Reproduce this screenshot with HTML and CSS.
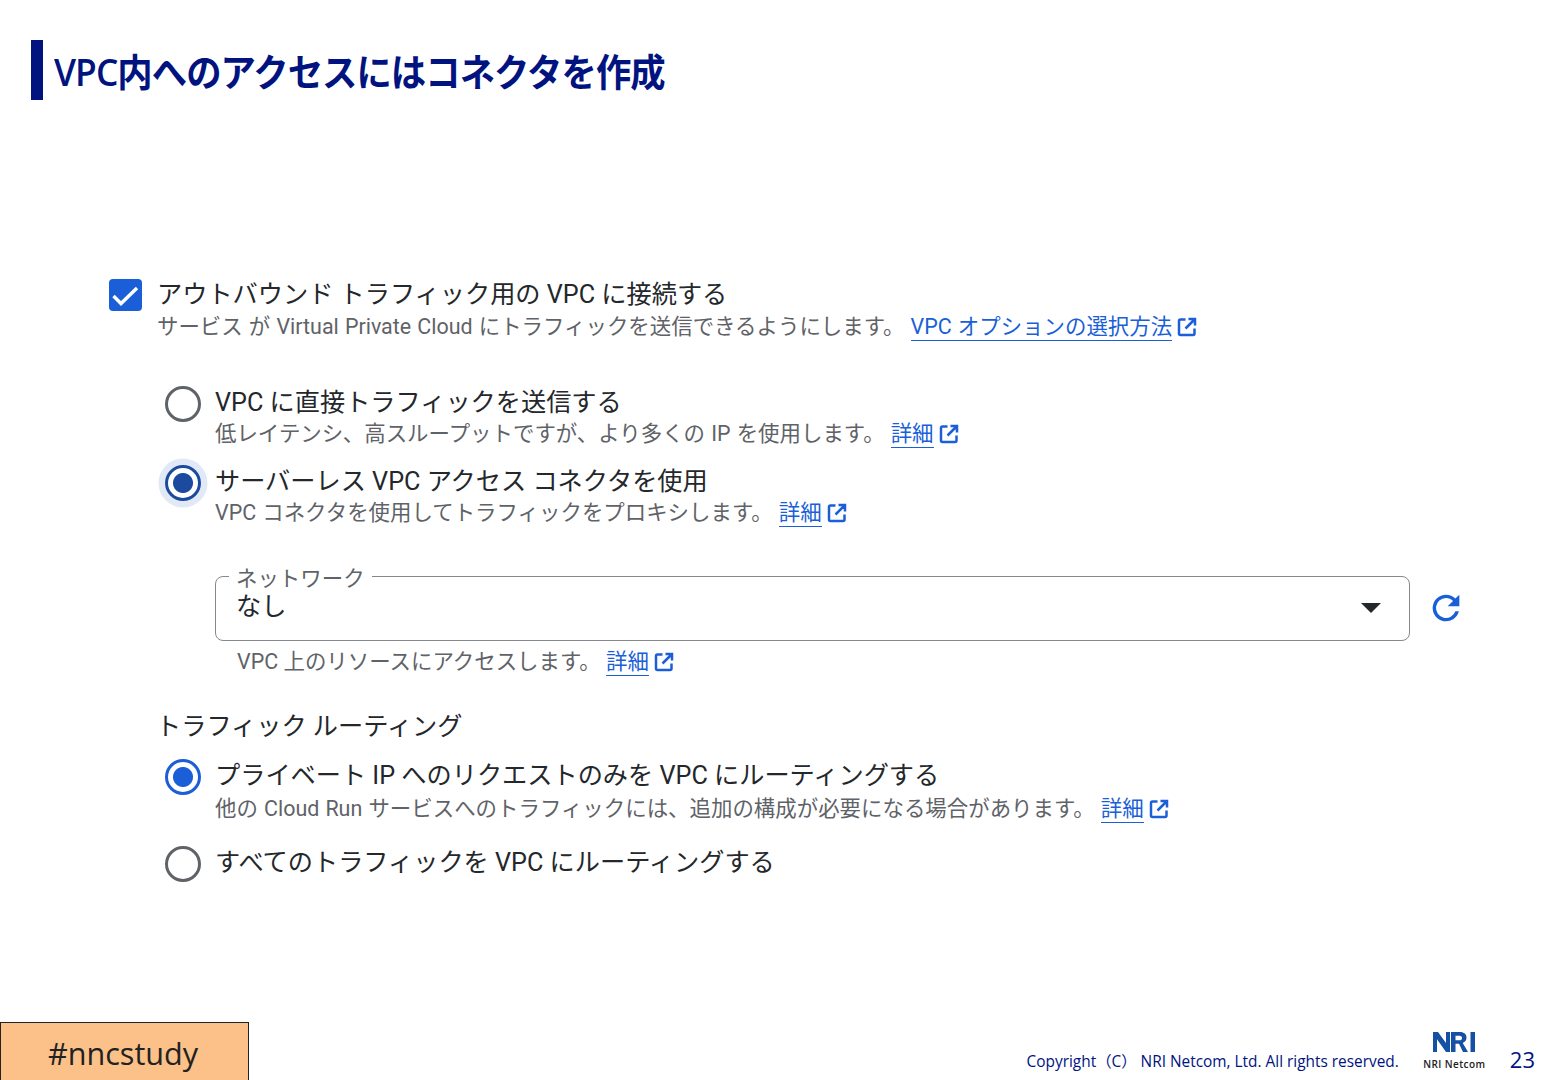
FILE: index.html
```html
<!DOCTYPE html>
<html lang="ja">
<head>
    <meta charset="UTF-8">
    <title>VPC内へのアクセスにはコネクタを作成</title>
    <link rel="stylesheet" href="styles.css">
</head>
<body>
<svg class="defs" width="0" height="0">
    <symbol id="ext" viewBox="0 0 20 20">
        <path d="M8.500 2.500H3.500A1.500 1.500 0 0 0 2 4V16.500A1.500 1.500 0 0 0 3.500 18H16A1.500 1.500 0 0 0 17.500 16.500V11.500M11.500 2H18V8.500M17.500 2.500L8.500 11.500" fill="none" stroke="currentColor" stroke-width="2.500"/>
    </symbol>
</svg>
<div class="slide">
    <div class="title"><h1>VPC内へのアクセスにはコネクタを作成</h1></div>

    <div class="content">
        <div class="check-row">
            <span class="checkbox">
                <svg width="33" height="32" viewBox="0 0 33 32"><path d="M4.500 17L12 24.500L28 9" fill="none" stroke="#fff" stroke-width="3.400"/></svg>
            </span>
            <div>
                <div class="label">アウトバウンド トラフィック用の VPC に接続する</div>
                <div class="sub">サービス が Virtual Private Cloud にトラフィックを送信できるようにします。 <a>VPC オプションの選択方法</a><svg class="ext"><use href="#ext"/></svg></div>
            </div>
        </div>

        <div class="radio-group first">
            <div class="radio-row">
                <span class="radio"></span>
                <div>
                    <div class="label">VPC に直接トラフィックを送信する</div>
                    <div class="sub">低レイテンシ、高スループットですが、より多くの IP を使用します。 <a>詳細</a><svg class="ext"><use href="#ext"/></svg></div>
                </div>
            </div>
            <div class="radio-row">
                <span class="radio on focus"></span>
                <div>
                    <div class="label">サーバーレス VPC アクセス コネクタを使用</div>
                    <div class="sub">VPC コネクタを使用してトラフィックをプロキシします。 <a>詳細</a><svg class="ext"><use href="#ext"/></svg></div>
                </div>
            </div>
        </div>

        <div class="field-row">
            <div class="select">
                <span class="select-label">ネットワーク</span>
                <span class="select-value">なし</span>
                <span class="caret"></span>
            </div>
            <svg class="refresh" width="40" height="40" viewBox="0 0 24 24"><path fill="#1a5fd8" d="M17.650 6.350A7.960 7.960 0 0 0 12 4a8 8 0 1 0 7.730 10h-2.080A6 6 0 1 1 12 6c1.660 0 3.140.69 4.220 1.780L13 11h7V4z"/></svg>
        </div>
        <div class="hint">VPC 上のリソースにアクセスします。 <a>詳細</a><svg class="ext"><use href="#ext"/></svg></div>

        <div class="section">トラフィック ルーティング</div>

        <div class="radio-group routing">
            <div class="radio-row">
                <span class="radio on bright"></span>
                <div>
                    <div class="label">プライベート IP へのリクエストのみを VPC にルーティングする</div>
                    <div class="sub">他の Cloud Run サービスへのトラフィックには、追加の構成が必要になる場合があります。 <a>詳細</a><svg class="ext"><use href="#ext"/></svg></div>
                </div>
            </div>
            <div class="radio-row last">
                <span class="radio"></span>
                <div class="label">すべてのトラフィックを VPC にルーティングする</div>
            </div>
        </div>
    </div>

    <div class="footer">
        <div class="tag">#nncstudy</div>
        <div class="footer-right">
            <span class="copyright">Copyright（C） NRI Netcom, Ltd. All rights reserved.</span>
            <div class="logo">
                <svg width="42" height="20" viewBox="0 0 42 18" preserveAspectRatio="none"><path fill="#1450a3" fill-rule="evenodd" d="M0 18V0h5l8 10V0h4v18h-4L4 6.500V18zM18 0h9c4 0 6.500 2 6.500 5 0 2.500-1.500 4.200-3.800 4.800L35 18h-5l-4-7.500h-3.500V18H18zM22.500 3.300V7.500h4c1.600 0 2.500-.8 2.500-2.100s-.9-2.100-2.500-2.100zM37.500 0H42v18h-4.500z"/></svg>
                <span>NRI Netcom</span>
            </div>
            <span class="page-no">23</span>
        </div>
    </div>
</div>
</body>
</html>
```
FILE: styles.css
```css
:root {
    --navy: #00137f;
    --blue: #1a5fd8;
    --text: #24272b;
    --muted: #5f6368;
}
html, body {
    margin: 0;
    padding: 0;
    background: #fff;
}
.defs { position: absolute; }
.slide {
    width: 1560px;
    height: 1080px;
    display: flex;
    flex-direction: column;
    overflow: hidden;
    font-family: Roboto, "Noto Sans CJK JP", sans-serif;
    color: var(--text);
}
.title {
    margin: 40px 0 0 31px;
    height: 60px;
    border-left: 12px solid var(--navy);
    padding-left: 11px;
    display: flex;
    align-items: center;
}
h1 {
    margin: 2px 0 0;
    color: var(--navy);
    font-family: "Open Sans", "Noto Sans CJK JP", sans-serif;
    font-size: 38px;
    font-weight: 600;
    letter-spacing: -1px;
    line-height: 60px;
    white-space: nowrap;
    transform: scaleX(0.93);
    transform-origin: left center;
}
.content {
    flex: 1;
    padding: 179px 0 0 109px;
}
.check-row {
    display: flex;
    gap: 15px;
}
.checkbox {
    width: 33px;
    height: 32px;
    background: var(--blue);
    border-radius: 4px;
    flex: none;
}
.checkbox svg { display: block; }
.label {
    font-size: 25.200px;
    line-height: 32px;
}
.sub, .hint {
    font-size: 21.450px;
    word-spacing: .8px;
    line-height: 32px;
    color: var(--muted);
}
a {
    color: var(--blue);
    border-bottom: 1px solid var(--blue);
    padding-bottom: 1px;
}
.ext {
    width: 20px;
    height: 20px;
    color: var(--blue);
    margin-left: 5px;
    vertical-align: -3px;
}
.radio-group { margin-left: 56px; }
.radio-group.first { margin-top: 44px; }
.radio-row {
    display: flex;
    gap: 14px;
    margin-bottom: 17px;
}
.radio-row .sub { line-height: 30px; }
.routing .sub { margin-top: 2px; }
.radio-row.last { margin-top: 23px; }
.radio {
    width: 36px;
    height: 36px;
    box-sizing: border-box;
    border: 3.500px solid var(--muted);
    border-radius: 50%;
    flex: none;
    margin-top: -1px;
    background: #fff;
}
.radio.on {
    border-color: var(--blue);
    background: radial-gradient(circle, var(--blue) 0 9.500px, #fff 10.500px);
}
.radio.focus {
    border-color: #1b4a9e;
    background: radial-gradient(circle, #1b4a9e 0 9.500px, #fff 10.500px);
    box-shadow: 0 0 0 6.500px #e2e9f6;
}
.field-row {
    display: flex;
    align-items: center;
    gap: 16px;
    margin: 48px 0 0 106px;
}
.refresh { margin-top: -2px; }
.select {
    position: relative;
    width: 1195px;
    height: 65px;
    box-sizing: border-box;
    border: 1px solid #85888c;
    border-radius: 8px;
    padding: 12px 20px;
    font-size: 25.200px;
    line-height: 36px;
}
.select-label {
    position: absolute;
    left: 13px;
    top: -11px;
    padding: 0 7px;
    background: #fff;
    font-size: 21.450px;
    line-height: 26px;
    color: var(--muted);
}
.caret {
    position: absolute;
    right: 28px;
    top: 26px;
    border-left: 10px solid transparent;
    border-right: 10px solid transparent;
    border-top: 10px solid #24272b;
}
.hint {
    margin: 5px 0 0 128px;
    word-spacing: 0;
}
.section {
    font-size: 25.200px;
    line-height: 32px;
    margin: 33px 0 17px 47px;
}
.footer {
    height: 58px;
    display: flex;
    justify-content: space-between;
    align-items: flex-end;
}
.tag {
    width: 249px;
    height: 58px;
    box-sizing: border-box;
    background: #fbc189;
    border: 1px solid #222;
    border-bottom: 0;
    padding-right: 3px;
    font-family: "Open Sans", sans-serif;
    font-size: 30.600px;
    line-height: 60px;
    text-align: center;
    color: #222;
}
.footer-right {
    display: flex;
    align-items: flex-end;
    padding: 0 25px 7px 0;
    color: var(--navy);
}
.copyright {
    font-family: "Open Sans", "Noto Sans CJK JP", sans-serif;
    font-size: 15.400px;
    line-height: 26px;
    margin: 0 24px -2px 0;
}
.logo {
    width: 63px;
    margin: 0 24px 3px 0;
    display: flex;
    flex-direction: column;
    align-items: center;
    gap: 6px;
    font-family: "Open Sans", sans-serif;
    font-size: 10px;
    font-weight: 600;
    line-height: 12px;
    letter-spacing: .4px;
    white-space: nowrap;
    color: #222;
}
.logo svg { display: block; }
.page-no {
    font-family: "Open Sans", sans-serif;
    font-size: 22px;
    line-height: 26px;
    margin-bottom: 1px;
}
```
